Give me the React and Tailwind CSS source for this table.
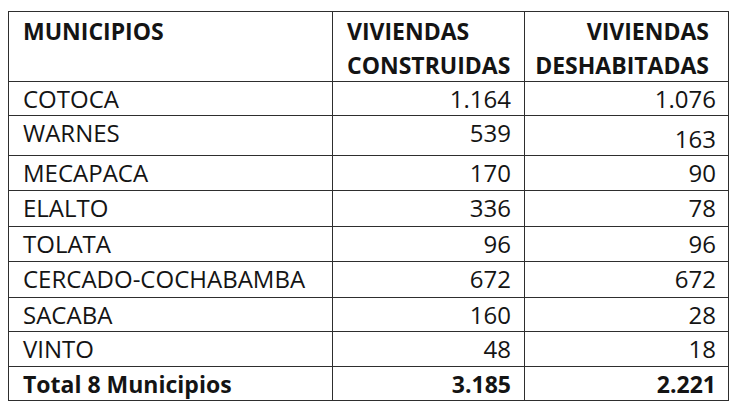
import React from "react";

const rows = [
  ["COTOCA", "1.164", "1.076"],
  ["WARNES", "539", "163"],
  ["MECAPACA", "170", "90"],
  ["ELALTO", "336", "78"],
  ["TOLATA", "96", "96"],
  ["CERCADO-COCHABAMBA", "672", "672"],
  ["SACABA", "160", "28"],
  ["VINTO", "48", "18"],
];

export default function App() {
  return (
    <div
      className="w-[735px] h-[417px] bg-white pt-[11px] pl-[8px] text-[#141414]"
      style={{ fontFamily: '"Open Sans", "Noto Sans", sans-serif' }}
    >
      <div className="grid w-[721px] grid-cols-[324px_192px_204px] grid-rows-[70px_34px_40px_35px_36px_35px_36px_34px_35px_34px] border-l border-t border-[#2e2e2e] text-[24px] leading-[33px]">
        <div className="border-r border-b border-[#2e2e2e] pl-[14px] pt-[3px] text-[23px] font-bold leading-[33.5px]">
          MUNICIPIOS
        </div>
        <div className="border-r border-b border-[#2e2e2e] pl-[14px] pt-[3px] text-[23px] font-bold leading-[33.5px] whitespace-nowrap">
          VIVIENDAS
          <br />
          CONSTRUIDAS
        </div>
        <div className="border-r border-b border-[#2e2e2e] pr-[19px] pt-[3px] text-right text-[23px] font-bold leading-[33.5px] whitespace-nowrap">
          VIVIENDAS
          <br />
          DESHABITADAS
        </div>
        {rows.map(([m, c, d], i) => (
          <React.Fragment key={m}>
            <div className="border-r border-b border-[#2e2e2e] pl-[14px]">{m}</div>
            <div className="border-r border-b border-[#2e2e2e] pr-[13px] text-right">{c}</div>
            <div
              className={
                i === 1
                  ? "border-r border-b border-[#2e2e2e] pr-[12px] pt-[6px] text-right"
                  : "border-r border-b border-[#2e2e2e] pr-[12px] text-right"
              }
            >
              {d}
            </div>
          </React.Fragment>
        ))}
        <div className="border-r border-b border-[#2e2e2e] pl-[14px] pt-[1px] text-[23px] font-bold">Total 8 Municipios</div>
        <div className="border-r border-b border-[#2e2e2e] pr-[13px] pt-[1px] text-right text-[23px] font-bold">3.185</div>
        <div className="border-r border-b border-[#2e2e2e] pr-[12px] pt-[1px] text-right text-[23px] font-bold">2.221</div>
      </div>
    </div>
  );
}
